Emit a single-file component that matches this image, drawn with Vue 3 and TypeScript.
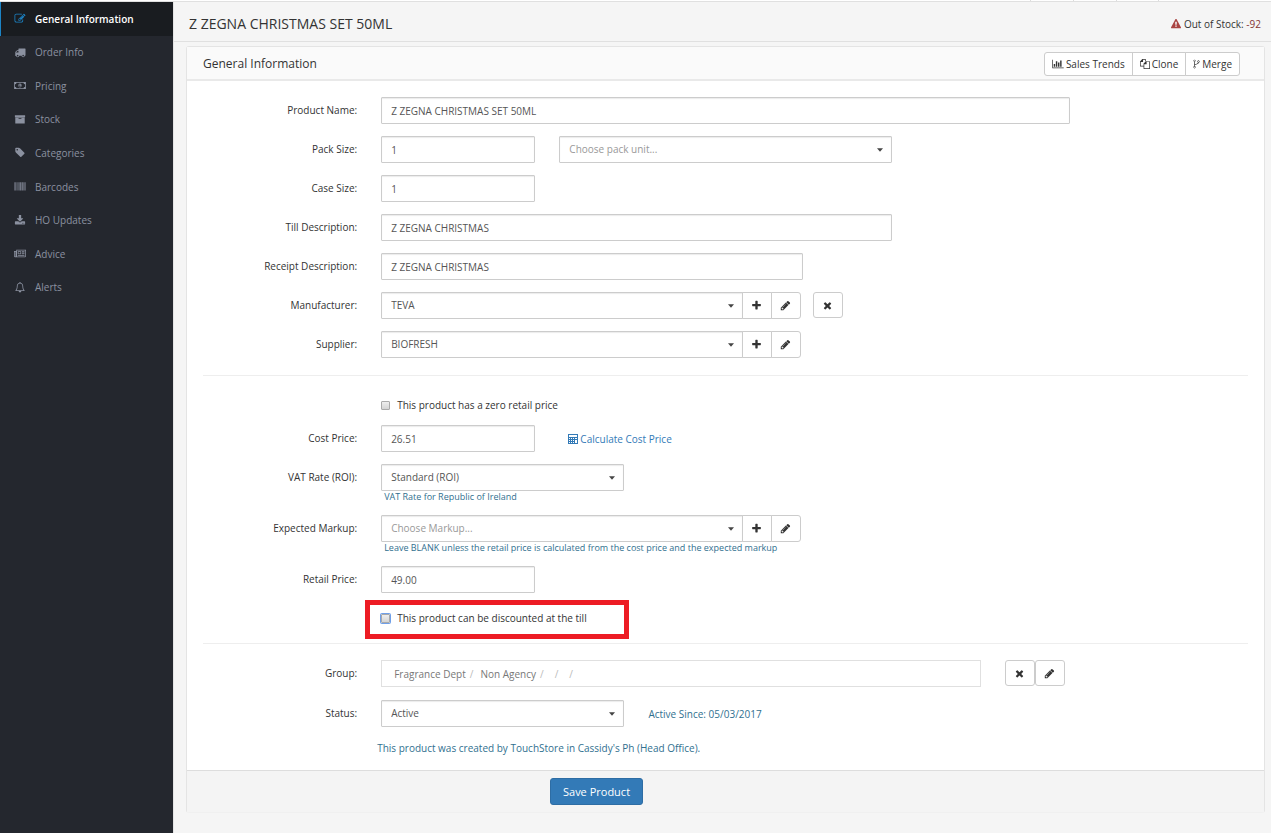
<script setup lang="ts">
import { reactive } from 'vue'

interface NavItem {
  label: string
  icon: string
  box: string
  active?: boolean
}

const SQUARE = '0 0 1792 1792'

const icons: Record<string, string> = {
  edit: 'M888 1184l116-116-152-152-116 116v56h96v96h56zm440-720q-16-16-33 1l-350 350q-17 17-1 33t33-1l350-350q17-17 1-33zm80 594v190q0 119-84.500 203.500t-203.500 84.500h-832q-119 0-203.500-84.500t-84.500-203.500v-832q0-119 84.500-203.500t203.500-84.500h832q63 0 117 25 15 7 18 23 3 17-9 29l-49 49q-14 14-32 8-23-6-45-6h-832q-66 0-113 47t-47 113v832q0 66 47 113t113 47h832q66 0 113-47t47-113v-126q0-13 9-22l64-64q15-15 35-7t20 29zm-96-738l288 288-672 672h-288v-288zm444 132l-92 92-288-288 92-92q28-28 68-28t68 28l152 152q28 28 28 68t-28 68z',
  truck: 'M640 1408q0-52-38-90t-90-38-90 38-38 90 38 90 90 38 90-38 38-90zm-384-512h384v-256h-158q-13 0-22 9l-195 195q-9 9-9 22v30zm1280 512q0-52-38-90t-90-38-90 38-38 90 38 90 90 38 90-38 38-90zm256-1088v1024q0 15-4 26.500t-13.500 18.500-16.500 11.500-23.500 6-22.500 2-25.500 0-22.500-.5q0 106-75 181t-181 75-181-75-75-181h-384q0 106-75 181t-181 75-181-75-75-181h-64q-3 0-22.500.5t-25.500 0-22.500-2-23.500-6-16.500-11.500-13.500-18.500-4-26.500q0-26 19-45t45-19v-320q0-8-.5-35t0-38 2.500-34.500 6.500-37 14-30.500 22.500-30l198-198q19-19 50.500-32t58.500-13h160v-192q0-26 19-45t45-19h1024q26 0 45 19t19 45z',
  money: 'M0 320H1920V1472H0ZM128 704V1088a256 256 0 0 1 256 256H1536a256 256 0 0 1 256-256V704a256 256 0 0 1-256-256H384a256 256 0 0 1-256 256ZM960 576c180 0 256 160 256 320s-76 320-256 320-256-160-256-320 76-320 256-320ZM896 704h96v320h64v96H832v-96h64z',
  archive: 'M64 192H1728V512H64ZM128 576H1664V1536H128ZM704 640a64 64 0 0 0 0 128H1088a64 64 0 0 0 0-128Z',
  tag: 'M576 448q0-53-37.500-90.500t-90.500-37.500-90.500 37.500-37.500 90.500 37.500 90.500 90.500 37.500 90.500-37.500 37.500-90.500zm1067 576q0 53-37 90l-491 492q-39 37-91 37-53 0-90-37l-715-716q-38-37-64.500-101t-26.500-117v-416q0-52 38-90t90-38h416q53 0 117 26.500t102 64.500l715 714q37 39 37 91z',
  barcode: 'M0 192H110V1536H0ZM170 192H240V1536H170ZM340 192H400V1536H340ZM500 192H570V1536H500ZM660 192H800V1536H660ZM880 192H1020V1536H880ZM1110 192H1180V1536H1110ZM1270 192H1420V1536H1270ZM1500 192H1560V1536H1500ZM1640 192H1792V1536H1640Z',
  download: 'M1344 1344q0-26-19-45t-45-19-45 19-19 45 19 45 45 19 45-19 19-45zm256 0q0-26-19-45t-45-19-45 19-19 45 19 45 45 19 45-19 19-45zm128-224v320q0 40-28 68t-68 28h-1472q-40 0-68-28t-28-68v-320q0-40 28-68t68-28h465l135 136q58 56 136 56t136-56l136-136h464q40 0 68 28t28 68zm-325-569q17 41-14 70l-448 448q-18 19-45 19t-45-19l-448-448q-31-29-14-70 17-39 59-39h256v-448q0-26 19-45t45-19h256q26 0 45 19t19 45v448h256q42 0 59 39z',
  newspaper: 'M384 256H2048V1344a192 192 0 0 1-192 192H192A192 192 0 0 1 0 1344V448H384ZM512 384V1408H1856a64 64 0 0 0 64-64V384ZM128 576V1344a64 64 0 0 0 128 0V576ZM640 512H1216V1024H640ZM768 640V896H1088V640ZM1344 512H1792V640H1344ZM1344 704H1792V832H1344ZM1344 896H1792V1024H1344ZM640 1152H1792V1280H640Z',
  bell: 'M896 0a96 96 0 0 1 96 128C1250 180 1408 400 1408 640c0 400 100 600 256 704 0 70-58 128-128 128H1120a224 224 0 0 1-448 0H256c-70 0-128-58-128-128 156-104 256-304 256-704 0-240 158-460 416-512a96 96 0 0 1 96-128ZM320 1344H1472C1340 1180 1280 950 1280 640 1280 400 1120 256 896 256S512 400 512 640C512 950 452 1180 320 1344Z',
  warning: 'M1024 1375v-190q0-14-9.500-23.500t-22.500-9.500h-192q-13 0-22.500 9.500t-9.500 23.500v190q0 14 9.500 23.500t22.500 9.500h192q13 0 22.500-9.500t9.500-23.500zm-2-374l18-459q0-12-10-19-13-11-24-11h-220q-11 0-24 11-10 7-10 21l17 457q0 10 10 16.500t24 6.500h185q14 0 23.500-6.500t10.500-16.500zm-14-934l768 1408q35 63-2 126-17 29-46.500 46t-63.500 17h-1536q-34 0-63.500-17t-46.500-46q-37-63-2-126l768-1408q17-31 47-49t65-18 65 18 47 49z',
  chart: 'M0 128H128V1536H2048V1664H0ZM256 896H512V1408H256ZM640 384H896V1408H640ZM1024 640H1280V1408H1024ZM1408 256H1664V1408H1408Z',
  copy: 'M416 0H960a96 96 0 0 1 96 96V400H928V128H544V544H128V1216H640V1344H96a96 96 0 0 1-96-96V448ZM1056 384H1696a96 96 0 0 1 96 96V1696a96 96 0 0 1-96 96H736a96 96 0 0 1-96-96V800ZM1184 512V928H768V1664H1664V512Z',
  fork: 'M448 128a192 192 0 0 1 64 373V940C840 850 1040 800 1086 629a192 192 0 1 1 132 4C1180 930 900 960 512 1080V1291a192 192 0 1 1-128 0V501A192 192 0 0 1 448 128ZM448 224a96 96 0 1 0 .1 0ZM448 1376a96 96 0 1 0 .1 0ZM1152 352a96 96 0 1 0 .1 0Z',
  plus: 'M1600 736v192q0 40-28 68t-68 28h-416v416q0 40-28 68t-68 28h-192q-40 0-68-28t-28-68v-416h-416q-40 0-68-28t-28-68v-192q0-40 28-68t68-28h416v-416q0-40 28-68t68-28h192q40 0 68 28t28 68v416h416q40 0 68 28t28 68z',
  pencil: 'M491 1536l91-91-235-235-91 91v107h128v128h107zm523-928q0-22-22-22-10 0-17 7l-542 542q-7 7-7 17 0 22 22 22 10 0 17-7l542-542q7-7 7-17zm-54-192l416 416-832 832h-416v-416zm683 96q0 53-37 90l-166 166-416-416 166-165q36-38 90-38 53 0 91 38l235 234q37 39 37 91z',
  times: 'M1490 1322q0 40-28 68l-136 136q-28 28-68 28t-68-28l-294-294-294 294q-28 28-68 28t-68-28l-136-136q-28-28-28-68t28-68l294-294-294-294q-28-28-28-68t28-68l136-136q28-28 68-28t68 28l294 294 294-294q28-28 68-28t68 28l136 136q28 28 28 68t-28 68l-294 294 294 294q28 28 28 68z',
  calculator: 'M0 0H10V10H0ZM1 1V3H9V1ZM1 4V5H2V4ZM3 4V5H4V4ZM5 4V5H6V4ZM7 4V5H9V4ZM1 6V7H2V6ZM3 6V7H4V6ZM5 6V7H6V6ZM7 6V9H9V6ZM1 8V9H2V8ZM3 8V9H4V8ZM5 8V9H6V8Z',
}

const nav: NavItem[] = [
  { label: 'General Information', icon: 'edit', box: SQUARE, active: true },
  { label: 'Order Info', icon: 'truck', box: SQUARE },
  { label: 'Pricing', icon: 'money', box: '0 0 1920 1792' },
  { label: 'Stock', icon: 'archive', box: SQUARE },
  { label: 'Categories', icon: 'tag', box: SQUARE },
  { label: 'Barcodes', icon: 'barcode', box: SQUARE },
  { label: 'HO Updates', icon: 'download', box: SQUARE },
  { label: 'Advice', icon: 'newspaper', box: '0 0 2048 1792' },
  { label: 'Alerts', icon: 'bell', box: SQUARE },
]

const product = reactive({
  name: 'Z ZEGNA CHRISTMAS SET 50ML',
  packSize: '1',
  packUnit: '',
  caseSize: '1',
  till: 'Z ZEGNA CHRISTMAS',
  receipt: 'Z ZEGNA CHRISTMAS',
  manufacturer: 'TEVA',
  supplier: 'BIOFRESH',
  zeroRetail: false,
  cost: '26.51',
  vat: 'Standard (ROI)',
  markup: '',
  retail: '49.00',
  discountable: false,
  status: 'Active',
})

const groupPath = ['Fragrance Dept', 'Non Agency', '', '']
</script>

<template>
  <div class="page">
    <div class="top-strip"><span></span><span></span><span></span></div>
    <div class="shell">
      <nav class="sidebar" aria-label="Product sections">
        <ul class="nav-list">
          <li v-for="item in nav" :key="item.label">
            <a href="#" class="nav-link" :class="{ active: item.active }">
              <span class="nav-icon">
                <svg class="icon" :viewBox="item.box" aria-hidden="true"><path :d="icons[item.icon]" /></svg>
              </span>
              {{ item.label }}
            </a>
          </li>
        </ul>
      </nav>

      <main class="main">
        <header class="page-head">
          <h1>{{ product.name }}</h1>
          <p class="stock-alert">
            <svg class="icon danger" :viewBox="SQUARE" aria-hidden="true"><path :d="icons.warning" /></svg>
            <span>Out of Stock: <b>-92</b></span>
          </p>
        </header>

        <form class="panel" @submit.prevent>
          <div class="panel-head">
            <h2>General Information</h2>
            <div class="tools">
              <button type="button" class="tool">
                <svg class="icon chart" viewBox="0 0 2048 1792" aria-hidden="true"><path :d="icons.chart" /></svg>Sales Trends
              </button>
              <button type="button" class="tool">
                <svg class="icon" :viewBox="SQUARE" aria-hidden="true"><path :d="icons.copy" /></svg>Clone
              </button>
              <button type="button" class="tool">
                <svg class="icon narrow" viewBox="192 0 1216 1792" aria-hidden="true"><path :d="icons.fork" /></svg>Merge
              </button>
            </div>
          </div>

          <div class="panel-body">
            <section class="block">
              <div class="row">
                <label class="label" for="name">Product Name:</label>
                <input id="name" v-model="product.name" class="control span-8" type="text" />
              </div>
              <div class="row">
                <label class="label" for="pack">Pack Size:</label>
                <input id="pack" v-model="product.packSize" class="control span-2" type="text" />
                <div class="select span-4">
                  <select v-model="product.packUnit" class="control placeholder" aria-label="Pack unit">
                    <option value="">Choose pack unit...</option>
                  </select>
                  <svg class="caret" viewBox="0 0 7 4" aria-hidden="true"><path d="M0 0H7L3.500 4Z" /></svg>
                </div>
              </div>
              <div class="row">
                <label class="label" for="case">Case Size:</label>
                <input id="case" v-model="product.caseSize" class="control span-2" type="text" />
              </div>
              <div class="row">
                <label class="label" for="till">Till Description:</label>
                <input id="till" v-model="product.till" class="control span-6" type="text" />
              </div>
              <div class="row">
                <label class="label" for="receipt">Receipt Description:</label>
                <input id="receipt" v-model="product.receipt" class="control span-5" type="text" />
              </div>
              <div class="row">
                <label class="label" for="manufacturer">Manufacturer:</label>
                <div class="input-group span-5">
                  <div class="select">
                    <select id="manufacturer" v-model="product.manufacturer" class="control">
                      <option>TEVA</option>
                    </select>
                    <svg class="caret" viewBox="0 0 7 4" aria-hidden="true"><path d="M0 0H7L3.500 4Z" /></svg>
                  </div>
                  <button type="button" class="addon" aria-label="Add manufacturer">
                    <svg class="icon" :viewBox="SQUARE" aria-hidden="true"><path :d="icons.plus" /></svg>
                  </button>
                  <button type="button" class="addon" aria-label="Edit manufacturer">
                    <svg class="icon" :viewBox="SQUARE" aria-hidden="true"><path :d="icons.pencil" /></svg>
                  </button>
                </div>
                <button type="button" class="square near" aria-label="Clear manufacturer">
                  <svg class="icon" :viewBox="SQUARE" aria-hidden="true"><path :d="icons.times" /></svg>
                </button>
              </div>
              <div class="row">
                <label class="label" for="supplier">Supplier:</label>
                <div class="input-group span-5">
                  <div class="select">
                    <select id="supplier" v-model="product.supplier" class="control">
                      <option>BIOFRESH</option>
                    </select>
                    <svg class="caret" viewBox="0 0 7 4" aria-hidden="true"><path d="M0 0H7L3.500 4Z" /></svg>
                  </div>
                  <button type="button" class="addon" aria-label="Add supplier">
                    <svg class="icon" :viewBox="SQUARE" aria-hidden="true"><path :d="icons.plus" /></svg>
                  </button>
                  <button type="button" class="addon" aria-label="Edit supplier">
                    <svg class="icon" :viewBox="SQUARE" aria-hidden="true"><path :d="icons.pencil" /></svg>
                  </button>
                </div>
              </div>
            </section>

            <section class="block prices">
              <div class="row">
                <label class="check">
                  <input v-model="product.zeroRetail" type="checkbox" />This product has a zero retail price
                </label>
              </div>
              <div class="row">
                <label class="label" for="cost">Cost Price:</label>
                <input id="cost" v-model="product.cost" class="control span-2" type="text" />
                <a href="#" class="calc span-4">
                  <svg class="icon" viewBox="0 0 10 10" aria-hidden="true"><path :d="icons.calculator" /></svg>Calculate Cost Price
                </a>
              </div>
              <div class="row">
                <label class="label" for="vat">VAT Rate (ROI):</label>
                <div class="span-3">
                  <div class="select">
                    <select id="vat" v-model="product.vat" class="control">
                      <option>Standard (ROI)</option>
                    </select>
                    <svg class="caret" viewBox="0 0 7 4" aria-hidden="true"><path d="M0 0H7L3.500 4Z" /></svg>
                  </div>
                  <p class="help">VAT Rate for Republic of Ireland</p>
                </div>
              </div>
              <div class="row">
                <label class="label" for="markup">Expected Markup:</label>
                <div class="span-5">
                  <div class="input-group">
                    <div class="select">
                      <select id="markup" v-model="product.markup" class="control placeholder">
                        <option value="">Choose Markup...</option>
                      </select>
                      <svg class="caret" viewBox="0 0 7 4" aria-hidden="true"><path d="M0 0H7L3.500 4Z" /></svg>
                    </div>
                    <button type="button" class="addon" aria-label="Add markup">
                      <svg class="icon" :viewBox="SQUARE" aria-hidden="true"><path :d="icons.plus" /></svg>
                    </button>
                    <button type="button" class="addon" aria-label="Edit markup">
                      <svg class="icon" :viewBox="SQUARE" aria-hidden="true"><path :d="icons.pencil" /></svg>
                    </button>
                  </div>
                  <p class="help">Leave BLANK unless the retail price is calculated from the cost price and the expected markup</p>
                </div>
              </div>
              <div class="row">
                <label class="label" for="retail">Retail Price:</label>
                <input id="retail" v-model="product.retail" class="control span-2" type="text" />
              </div>
              <div class="row">
                <label class="check marked">
                  <input v-model="product.discountable" class="focused" type="checkbox" />This product can be discounted at the till
                </label>
              </div>
            </section>

            <section class="block status">
              <div class="row">
                <span class="label">Group:</span>
                <ol class="crumbs span-7">
                  <li v-for="(part, i) in groupPath" :key="i">{{ part }}<i>/</i></li>
                </ol>
                <div class="pair">
                  <button type="button" class="square" aria-label="Clear group">
                    <svg class="icon" :viewBox="SQUARE" aria-hidden="true"><path :d="icons.times" /></svg>
                  </button>
                  <button type="button" class="square" aria-label="Edit group">
                    <svg class="icon" :viewBox="SQUARE" aria-hidden="true"><path :d="icons.pencil" /></svg>
                  </button>
                </div>
              </div>
              <div class="row">
                <label class="label" for="status">Status:</label>
                <div class="select span-3">
                  <select id="status" v-model="product.status" class="control">
                    <option>Active</option>
                  </select>
                  <svg class="caret" viewBox="0 0 7 4" aria-hidden="true"><path d="M0 0H7L3.500 4Z" /></svg>
                </div>
                <p class="info span-4">Active Since: 05/03/2017</p>
              </div>
              <div class="row">
                <p class="info created">This product was created by TouchStore in Cassidy's Ph (Head Office).</p>
              </div>
            </section>
          </div>

          <footer class="panel-foot">
            <button type="submit" class="save">Save Product</button>
          </footer>
        </form>
      </main>
    </div>
  </div>
</template>

<style>
body {
  margin: 0;
  background: #f5f5f5;
}
</style>

<style scoped>
.page {
  display: flex;
  flex-direction: column;
  min-height: 100vh;
  font: 10px/16px "Open Sans", sans-serif;
  color: #333;
}
.page *,
.page *::after {
  box-sizing: border-box;
}
h1,
h2,
p,
ul,
ol {
  margin: 0;
  padding: 0;
  font-weight: 400;
  list-style: none;
}
a {
  text-decoration: none;
}
button,
input,
select {
  margin: 0;
  font: inherit;
}
.icon {
  flex: none;
  width: 10px;
  height: 10px;
  fill: currentColor;
  fill-rule: evenodd;
}
.top-strip {
  display: flex;
  justify-content: flex-end;
  height: 2px;
  padding-right: 112px;
  background: #fff;
  border-bottom: 1px solid #e0e0e0;
}
.top-strip span {
  width: 43px;
  border-left: 1px solid #ddd;
}
.top-strip span:last-child {
  border-right: 1px solid #ddd;
}
.shell {
  display: flex;
  flex: 1;
}

.sidebar {
  flex: none;
  width: 173px;
  background: #24272e;
}
.nav-list {
  display: grid;
  grid-auto-rows: 1fr;
  height: 302px;
}
.nav-link {
  display: flex;
  align-items: center;
  height: 100%;
  padding-left: 10px;
  color: #8b91a0;
}
.nav-link.active {
  padding-left: 9px;
  border-left: 1px solid #1c84c6;
  background: #191c20;
  color: #fff;
  font-weight: 600;
}
.nav-icon {
  display: flex;
  justify-content: center;
  width: 20px;
  margin-right: 5px;
}
.nav-icon .icon {
  width: 12px;
  height: 11px;
}
.active .nav-icon {
  color: #1c84c6;
}

.main {
  flex: 1;
  min-width: 0;
  border-left: 1px solid #e4e4e4;
}
.page-head {
  display: flex;
  align-items: center;
  justify-content: space-between;
  height: 40px;
  padding: 4px 10px 0 15px;
  border-bottom: 1px solid #e0e0e0;
}
h1 {
  font-size: 14px;
  line-height: 20px;
}
.stock-alert {
  display: flex;
  align-items: center;
  gap: 3px;
}
.stock-alert b {
  font-weight: 400;
  color: #843534;
}
.danger {
  color: #a94442;
}

.panel {
  margin: 4px 6px 0 12px;
  border: 1px solid #e4e4e4;
  border-bottom-color: #f0f0f0;
  border-radius: 3px;
  background: #fff;
}
.panel-head {
  display: flex;
  align-items: center;
  justify-content: space-between;
  height: 34px;
  padding: 2px 24px 0 16px;
  border-bottom: 2px solid #e9e9e9;
  background: #fafafa;
}
h2 {
  font-size: 12px;
}
.tools {
  display: flex;
}
.tool {
  display: flex;
  align-items: center;
  gap: 2px;
  height: 24px;
  padding: 0 7px;
  border: 1px solid #ccc;
  background: #fff;
  color: #333;
}
.tool + .tool {
  margin-left: -1px;
}
.tool:first-child {
  border-radius: 3px 0 0 3px;
}
.tool:last-child {
  border-radius: 0 3px 3px 0;
}
.icon.chart {
  width: 12px;
}
.icon.narrow {
  width: 7px;
}

.panel-body {
  padding: 0 16px;
}
.block {
  display: flex;
  flex-direction: column;
  gap: 12px;
  padding: 16px 0 17px;
}
.block + .block {
  border-top: 1px solid #eee;
}
.block.prices {
  padding-top: 21px;
}
.block.status {
  gap: 13px;
  padding-bottom: 14px;
}
.row {
  display: grid;
  grid-template-columns: repeat(12, minmax(0, 1fr));
  column-gap: 24px;
}
.label {
  grid-column: span 2;
  padding-top: 5px;
  text-align: right;
}
.span-2 {
  grid-column: span 2;
}
.span-3 {
  grid-column: span 3;
}
.span-4 {
  grid-column: span 4;
}
.span-5 {
  grid-column: span 5;
}
.span-6 {
  grid-column: span 6;
}
.span-7 {
  grid-column: span 7;
}
.span-8 {
  grid-column: span 8;
}
.control {
  display: block;
  width: 100%;
  height: 27px;
  padding: 1px 9px 0;
  border: 1px solid #ccc;
  border-radius: 1px;
  background: #fff;
  box-shadow: inset 0 1px 1px rgba(0, 0, 0, 0.08);
  color: #555;
}
.select {
  position: relative;
}
select.control {
  padding: 0 20px 2px 9px;
  appearance: none;
}
.control.placeholder {
  color: #999;
}
.caret {
  position: absolute;
  top: 12px;
  right: 9px;
  width: 6px;
  height: 4px;
  fill: #444;
  pointer-events: none;
}
.input-group {
  display: flex;
  margin-right: 2px;
}
.input-group .select {
  flex: 1;
}
.addon,
.square {
  display: flex;
  align-items: center;
  justify-content: center;
  width: 30px;
  height: 27px;
  padding: 0;
  border: 1px solid #ccc;
  background: #fff;
  color: #333;
}
.addon .icon,
.square .icon {
  width: 11px;
  height: 11px;
}
.addon {
  margin-left: -1px;
}
.addon:last-child {
  border-radius: 0 3px 3px 0;
}
.square {
  height: 26px;
  border-radius: 3px;
}
.near {
  margin-left: -14px;
}
.pair {
  display: flex;
}
.help {
  padding-left: 3px;
  font-size: 9px;
  line-height: 12px;
  white-space: nowrap;
  color: #31708f;
}
.calc {
  display: flex;
  align-items: center;
  gap: 2px;
  padding-left: 9px;
  color: #337ab7;
}
.check {
  position: relative;
  display: flex;
  grid-column: 3 / span 6;
  justify-self: start;
  align-items: center;
  gap: 7px;
}
.check input {
  width: 9px;
  height: 9px;
  border: 1px solid #aaa;
  border-radius: 1px;
  background: linear-gradient(#eee, #d4d4d4);
  appearance: none;
}
.check input:checked {
  background: #337ab7;
}
.check .focused {
  box-shadow: 0 0 0 1px #6f9fe8;
}
.marked {
  margin-top: 5px;
}
.marked::after {
  content: "";
  position: absolute;
  inset: -10px -42px -13px -16px;
  border: 5px solid #ed1c24;
  pointer-events: none;
}
.crumbs {
  display: flex;
  align-items: center;
  height: 27px;
  padding: 0 12px;
  border: 1px solid #e0e0e0;
  color: #777;
}
.crumbs li {
  margin-right: 7px;
}
.crumbs i {
  margin-left: 4px;
  font-style: normal;
  color: #bbb;
}
.info {
  align-self: center;
  color: #31708f;
}
.created {
  grid-column: 3 / -1;
  margin-left: -4px;
}
.panel-foot {
  padding: 7px 16px 7px calc(100% / 3 + 4px);
  border-top: 1px solid #ddd;
  background: #f4f4f4;
}
.save {
  display: block;
  height: 27px;
  padding: 0 12px;
  border: 1px solid #2e6da4;
  border-radius: 3px;
  background: #337ab7;
  color: #fff;
  font-size: 11px;
}
</style>
